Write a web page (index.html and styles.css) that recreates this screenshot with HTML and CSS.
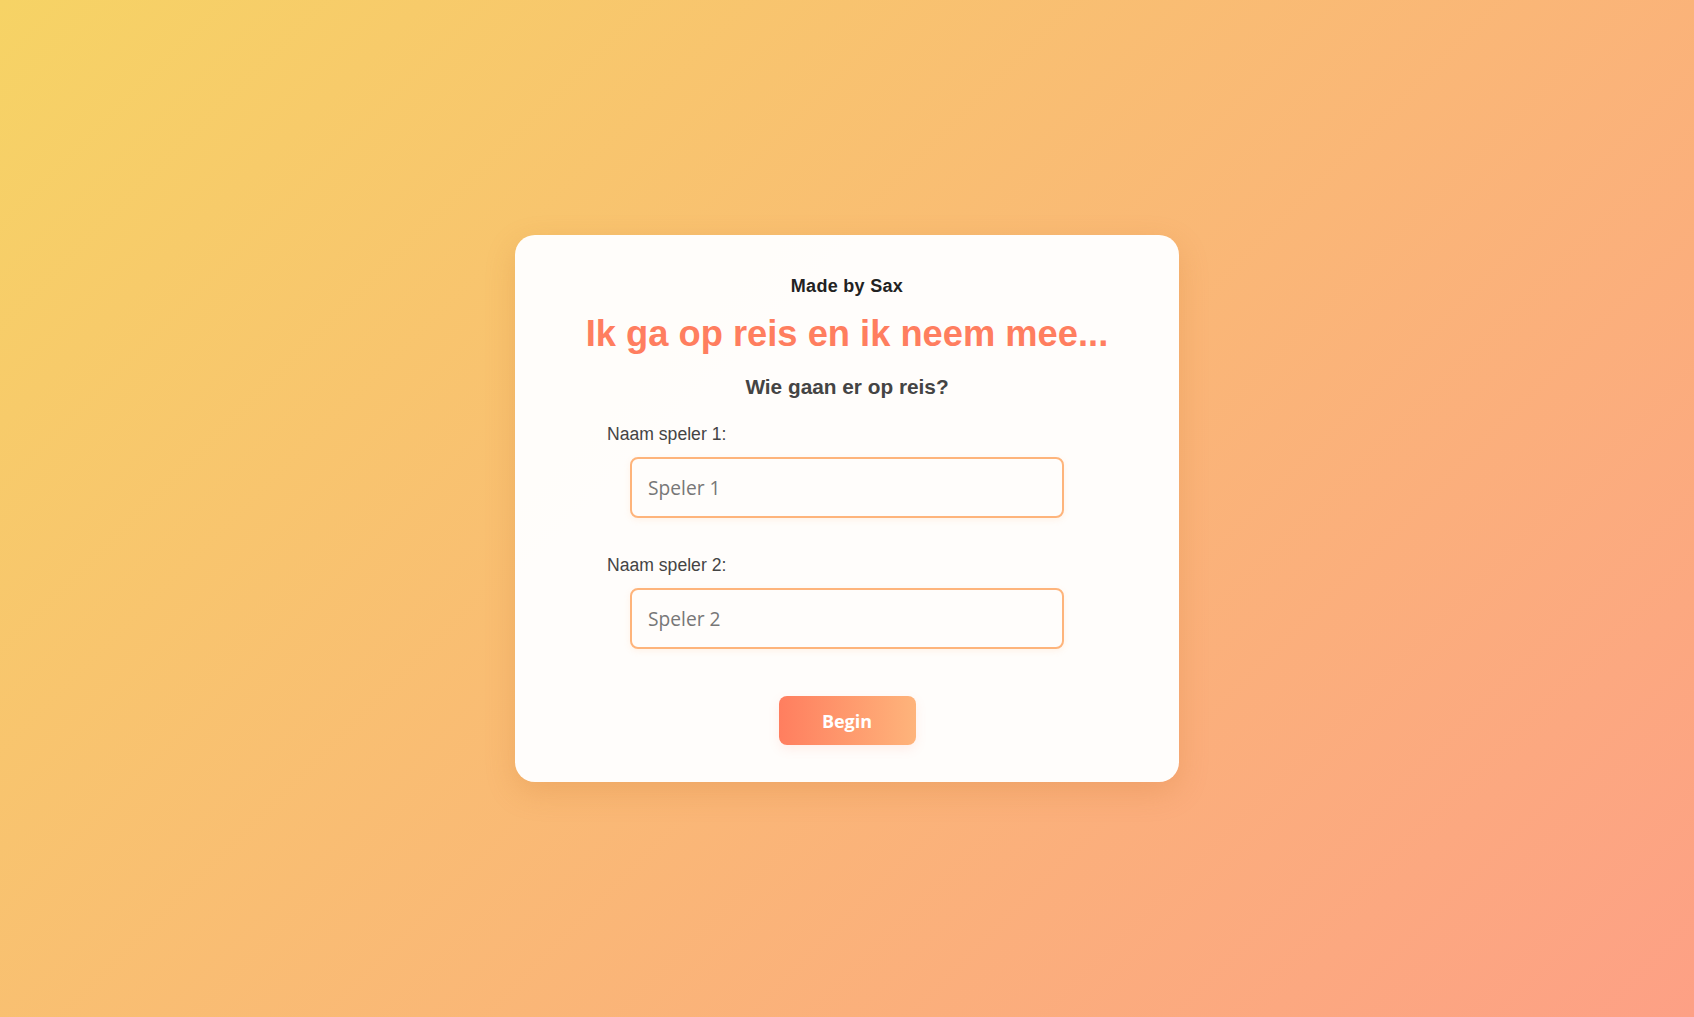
FILE: index.html
```html
<!DOCTYPE html>
<html lang="nl">
<head>
<meta charset="utf-8">
<title>Ik ga op reis en ik neem mee...</title>
<link rel="stylesheet" href="styles.css">
</head>
<body>
<main class="card">
  <p class="credit">Made by Sax</p>
  <h1 class="title">Ik ga op reis en ik neem mee...</h1>
  <h2 class="subtitle">Wie gaan er op reis?</h2>
  <div class="form">
    <div class="group">
      <label class="label" for="p1">Naam speler 1:</label>
      <input class="field" id="p1" type="text" placeholder="Speler 1">
    </div>
    <div class="group">
      <label class="label" for="p2">Naam speler 2:</label>
      <input class="field" id="p2" type="text" placeholder="Speler 2">
    </div>
  </div>
  <button class="start" type="button">Begin</button>
</main>
</body>
</html>
```

FILE: styles.css
```css
* { box-sizing: border-box; }

html, body { height: 100%; }

body {
  margin: 0;
  display: flex;
  align-items: center;
  justify-content: center;
  background: linear-gradient(135deg, #f6d365 0%, #fda085 100%);
  font-family: "Liberation Sans", Arial, sans-serif;
}

.card {
  width: 664px;
  padding: 40px 40px 37px;
  background: rgba(255, 255, 255, 0.97);
  border-radius: 20px;
  box-shadow: 0 10px 30px rgba(200, 110, 40, 0.22);
  display: flex;
  flex-direction: column;
  align-items: center;
  text-align: center;
}

.credit {
  margin: 0;
  font-size: 18px;
  line-height: 22px;
  font-weight: bold;
  color: #222;
  letter-spacing: 0.3px;
}

.title {
  margin: 15px 0 0;
  font-size: 36.3px;
  line-height: 44px;
  font-weight: bold;
  color: #ff7e5f;
}

.subtitle {
  margin: 18px 0 0;
  font-size: 20.8px;
  line-height: 26px;
  font-weight: bold;
  color: #444;
}

.form {
  width: 480px;
  margin-top: 23px;
  display: flex;
  flex-direction: column;
  gap: 36px;
}

.group {
  display: flex;
  flex-direction: column;
  align-items: center;
}

.label {
  align-self: flex-start;
  font-size: 17.6px;
  line-height: 22px;
  color: #444;
  margin-bottom: 12px;
}

.field {
  width: 434px;
  height: 61px;
  padding: 0 16px;
  border: 2px solid #feb47b;
  border-radius: 8px;
  background: #fffdfb;
  font-family: "Open Sans", "Noto Sans", sans-serif;
  font-size: 19.2px;
  color: #333;
  box-shadow: 0 2px 6px rgba(254, 180, 123, 0.15);
  outline: none;
}

.field::placeholder { color: #777; }

.start {
  margin-top: 47px;
  width: 137px;
  height: 49px;
  border: none;
  border-radius: 8px;
  background: linear-gradient(90deg, #ff7e5f 0%, #feb47b 100%);
  color: #fff;
  font-family: "Open Sans", "Noto Sans", sans-serif;
  font-size: 18px;
  font-weight: bold;
  box-shadow: 0 4px 12px rgba(255, 126, 95, 0.12);
  cursor: pointer;
}
```
